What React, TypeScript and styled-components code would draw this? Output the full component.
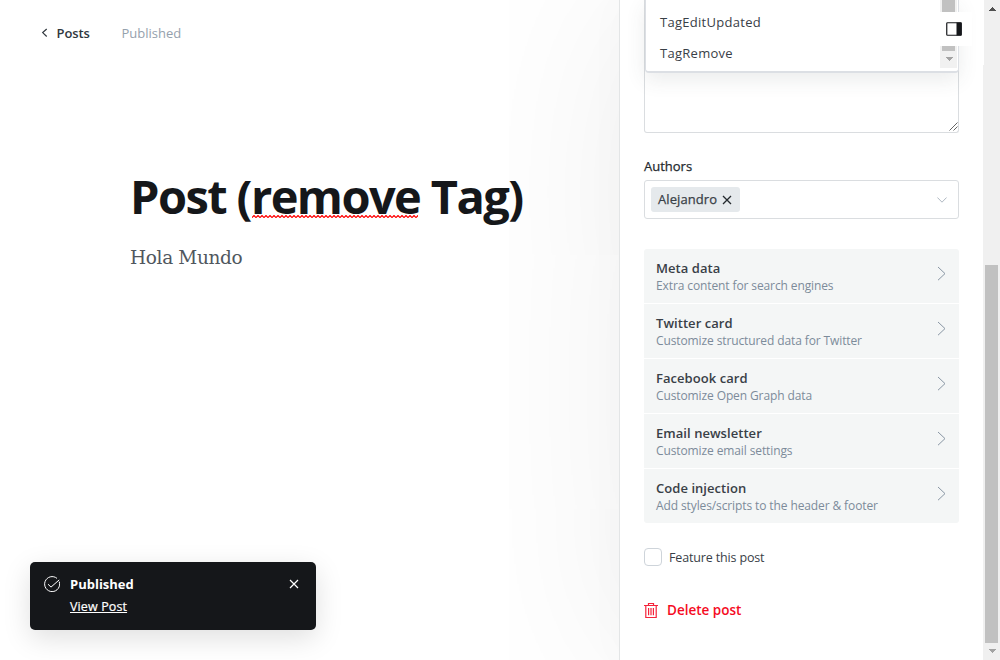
import React from "react";
import styled, { createGlobalStyle } from "styled-components";

const GlobalStyle = createGlobalStyle`
  *, *::before, *::after { box-sizing: border-box; }
  body { margin: 0; background: #fff; overflow: hidden; }
  body, button { font-family: "Open Sans", "Noto Sans", sans-serif; font-size: 13px; color: #394047; }
  button { border: 0; padding: 0; background: none; }
  svg { display: block; flex: none; }
`;

const Page = styled.div`
  position: relative;
  display: grid;
  grid-template-columns: 619px 364px 17px;
  width: 1000px;
  height: 660px;
  overflow: hidden;
`;

const Editor = styled.main`
  display: flex;
  flex-direction: column;
`;

const TopBar = styled.header`
  display: flex;
  align-items: center;
  height: 66px;
  padding-left: 41px;
`;

const BackLink = styled.a`
  display: flex;
  align-items: center;
  gap: 8.5px;
  width: 80.5px;
  font-weight: 600;
  letter-spacing: -0.1px;
  color: #30373e;
`;

const Status = styled.span`
  color: #95a1ad;
`;

const Content = styled.article`
  display: flex;
  flex-direction: column;
  padding: 102px 0 0 130px;
`;

const Title = styled.h1`
  margin: 0;
  font-size: 47px;
  font-weight: 700;
  line-height: 56px;
  letter-spacing: -1.6px;
  white-space: nowrap;
  color: #15171a;
`;

const Misspelled = styled.span`
  position: relative;
`;

const Squiggle = styled.svg`
  position: absolute;
  left: 1px;
  bottom: 10px;
  width: calc(100% - 3px);
  height: 3px;
`;

const Body = styled.p`
  margin: 19px 0 0;
  font-family: "DejaVu Serif", serif;
  font-size: 18.5px;
  line-height: 30px;
  letter-spacing: -0.35px;
  color: #50575e;
`;

const Settings = styled.aside`
  position: relative;
  display: flex;
  flex-direction: column;
  padding: 0 24px;
  border-left: 1px solid #e3e5e6;
  background: #fff;
  box-shadow: 0 0 190px rgba(0, 0, 0, 0.07), 0 0 40px rgba(0, 0, 0, 0.025);
`;

const Excerpt = styled.div`
  display: flex;
  justify-content: flex-end;
  align-items: flex-end;
  height: 133px;
  padding: 1px 0 1px 1px;
  border: 1px solid #dadde0;
  border-top: 0;
  border-radius: 0 0 3px 3px;
`;

const Label = styled.label`
  margin-top: 23px;
  line-height: 20px;
  -webkit-text-stroke: 0.25px currentColor;
  color: #24292e;
`;

const Select = styled.div`
  display: flex;
  align-items: center;
  justify-content: space-between;
  height: 39px;
  margin-top: 4px;
  padding: 0 11px 0 6px;
  border: 1px solid #dadde0;
  border-radius: 3px;
`;

const Token = styled.span`
  display: flex;
  align-items: center;
  gap: 5px;
  height: 25px;
  padding: 0 8px 0 7px;
  border-radius: 3px;
  background: #e5e9ec;
  line-height: 18px;
  letter-spacing: 0.08px;
  -webkit-text-stroke: 0.25px currentColor;
  color: #394047;
`;

const TokenName = styled.span`
  padding-bottom: 2px;
`;

const Panels = styled.nav`
  display: flex;
  flex-direction: column;
  gap: 1px;
  margin-top: 30px;
  border-radius: 3px;
  overflow: hidden;
`;

const Panel = styled.button`
  display: flex;
  align-items: flex-start;
  justify-content: space-between;
  height: 54px;
  padding: 9px 13px 0 12px;
  text-align: left;
  background: #f4f6f6;
`;

const PanelText = styled.span`
  display: flex;
  flex-direction: column;
`;

const PanelTitle = styled.span`
  font-weight: 600;
  line-height: 20px;
  letter-spacing: 0.05px;
`;

const PanelHint = styled.span`
  font-size: 12px;
  line-height: 16px;
  letter-spacing: -0.11px;
  color: #7c8b9a;
`;

const PanelArrow = styled.svg`
  margin-top: 8px;
`;

const Feature = styled.label`
  display: flex;
  align-items: center;
  gap: 7px;
  height: 18px;
  margin-top: 25px;
  font-size: 12.5px;
  letter-spacing: -0.15px;
`;

const Checkbox = styled.span`
  width: 18px;
  height: 18px;
  border: 1px solid #ced4da;
  border-radius: 4px;
`;

const DeleteButton = styled.button`
  display: flex;
  align-items: center;
  gap: 9px;
  height: 20px;
  margin-top: 34px;
  font-size: 13.5px;
  font-weight: 600;
  color: #f50b23;
`;

const Menu = styled.div`
  position: absolute;
  top: 0;
  left: 25px;
  display: flex;
  justify-content: space-between;
  width: 314px;
  height: 73px;
  padding-right: 1px;
  border: 1px solid #dcdfe4;
  border-width: 0 1px 2px;
  border-radius: 0 0 4px 4px;
  background: #fff;
  box-shadow: 0 7px 20px rgba(57, 64, 71, 0.1);
`;

const Options = styled.div`
  display: flex;
  flex-direction: column;
  padding: 7px 0 0 14px;
`;

const Option = styled.span`
  line-height: 31px;
  letter-spacing: 0.28px;
`;

const MenuScroll = styled.div`
  display: flex;
  flex-direction: column;
  align-items: center;
  width: 17px;
  height: 68px;
  background: #f1f1f1;
`;

const MenuThumb = styled.div`
  width: 13px;
  height: 51px;
  margin-bottom: 6px;
  background: #c1c1c1;
`;

const Toggle = styled.button`
  position: absolute;
  top: 12px;
  left: 320px;
  display: flex;
  align-items: center;
  width: 32px;
  height: 34px;
  padding-left: 6px;
  background: #fff;
`;

const ScrollTrack = styled.div`
  z-index: 1;
  display: flex;
  flex-direction: column;
  align-items: center;
  padding-top: 7px;
  background: linear-gradient(#fff, #fff) 0 0 / 1px 65px no-repeat, #f0f0f0;
`;

const ScrollThumb = styled.div`
  width: 13px;
  height: 378px;
  margin: 254px 0 6px;
  background: #c1c1c1;
`;

const Toast = styled.section`
  position: absolute;
  left: 30px;
  top: 562px;
  display: flex;
  align-items: flex-start;
  width: 286px;
  height: 68px;
  padding: 12px 17px 0 14px;
  border-radius: 5px;
  background: #15171a;
  color: #fff;
  box-shadow: 0 8px 28px rgba(0, 0, 0, 0.13);
`;

const ToastText = styled.div`
  display: flex;
  flex: 1;
  flex-direction: column;
  gap: 3px;
  padding-left: 10px;
  line-height: 20px;
`;

const ToastTitle = styled.strong`
  font-weight: 700;
`;

const ToastLink = styled.a`
  font-size: 12.5px;
  letter-spacing: 0.12px;
  -webkit-text-stroke: 0.2px currentColor;
  text-decoration: underline;
  text-underline-offset: 1px;
`;

const ToastIcon = styled.svg`
  margin-top: 2px;
`;

const ToastClose = styled.svg`
  margin-top: 5px;
`;

const Caret = ({ up, color }: { up?: boolean; color: string }) => (
  <svg width="8" height="4" viewBox="0 0 8 4" shapeRendering="crispEdges">
    <path d={up ? "M0 4 4 0 8 4Z" : "M0 0 4 4 8 0Z"} fill={color} />
  </svg>
);

const panels = [
  ["Meta data", "Extra content for search engines"],
  ["Twitter card", "Customize structured data for Twitter"],
  ["Facebook card", "Customize Open Graph data"],
  ["Email newsletter", "Customize email settings"],
  ["Code injection", "Add styles/scripts to the header & footer"],
];

export default function App() {
  return (
    <Page>
      <GlobalStyle />
      <Editor>
        <TopBar>
          <BackLink>
            <svg width="7" height="10" viewBox="0 0 7 10" fill="none" stroke="#30373e" strokeWidth="1.2">
              <path d="M5.7 1 1.7 4.6l4 3.9" />
            </svg>
            Posts
          </BackLink>
          <Status>Published</Status>
        </TopBar>
        <Content>
          <Title>
            Post (
            <Misspelled>
              remove
              <Squiggle>
                <defs>
                  <pattern id="wave" width="4" height="3" patternUnits="userSpaceOnUse">
                    <path d="M-1 1.5 0 2.5 2 .5 4 2.5 5 1.5" fill="none" stroke="#f00" strokeWidth="1.2" />
                  </pattern>
                </defs>
                <rect width="100%" height="3" fill="url(#wave)" />
              </Squiggle>
            </Misspelled>{" "}
            Tag)
          </Title>
          <Body>Hola Mundo</Body>
        </Content>
      </Editor>

      <Settings>
        <Excerpt>
          <svg width="9" height="9" viewBox="0 0 9 9" stroke="#555" strokeWidth="0.9">
            <path d="M.5 8.5l8-8M4.5 8.5l4-4" />
          </svg>
        </Excerpt>
        <Label>Authors</Label>
        <Select>
          <Token>
            <TokenName>Alejandro</TokenName>
            <svg width="10" height="10" viewBox="0 0 10 10" stroke="#24292e" strokeWidth="1.3">
              <path d="M1 1l8 8M9 1 1 9" />
            </svg>
          </Token>
          <svg width="10" height="6" viewBox="0 0 10 6" fill="none" stroke="#aeb7c1" strokeWidth="1">
            <path d="M.4.5 5 5.2 9.6.5" />
          </svg>
        </Select>
        <Panels>
          {panels.map(([title, hint]) => (
            <Panel key={title}>
              <PanelText>
                <PanelTitle>{title}</PanelTitle>
                <PanelHint>{hint}</PanelHint>
              </PanelText>
              <PanelArrow width="9" height="15" viewBox="0 0 9 15" fill="none" stroke="#8996a4" strokeWidth="1">
                <path d="M1 1l7 6.6-7 6.6" />
              </PanelArrow>
            </Panel>
          ))}
        </Panels>
        <Feature>
          <Checkbox />
          Feature this post
        </Feature>
        <DeleteButton>
          <svg width="14" height="15" viewBox="0 0 14 15" fill="none" stroke="#f5233a" strokeWidth="1.2">
            <path d="M0 2.5h14M4.5 2.5v-2h5v2M1.8 2.5v12h10.4v-12M4.6 5v7.2M7 5v7.2M9.4 5v7.2" />
          </svg>
          Delete post
        </DeleteButton>

        <Menu>
          <Options>
            <Option>TagEditUpdated</Option>
            <Option>TagRemove</Option>
          </Options>
          <MenuScroll>
            <MenuThumb />
            <Caret color="#a3a3a3" />
          </MenuScroll>
        </Menu>
        <Toggle aria-label="Settings">
          <svg width="16" height="14" viewBox="0 0 16 14">
            <rect x=".75" y=".75" width="14.5" height="12.5" rx=".8" fill="#fff" stroke="#15171a" strokeWidth="1.2" />
            <path d="M10.5.5H15.5v13h-5z" fill="#15171a" />
          </svg>
        </Toggle>
      </Settings>

      <ScrollTrack>
        <Caret up color="#505050" />
        <ScrollThumb />
        <Caret color="#a3a3a3" />
      </ScrollTrack>

      <Toast>
        <ToastIcon width="16" height="16" viewBox="0 0 16 16" fill="none" stroke="#fff" strokeWidth="1">
          <path d="M15.2 5.6A7.5 7.5 0 1 1 13 2.4" />
          <path d="M4 8.2l3 2.9 8.2-7.2" />
        </ToastIcon>
        <ToastText>
          <ToastTitle>Published</ToastTitle>
          <ToastLink>View Post</ToastLink>
        </ToastText>
        <ToastClose width="10" height="10" viewBox="0 0 10 10" stroke="#fff" strokeWidth="1.2">
          <path d="M1 1l8 8M9 1 1 9" />
        </ToastClose>
      </Toast>
    </Page>
  );
}
